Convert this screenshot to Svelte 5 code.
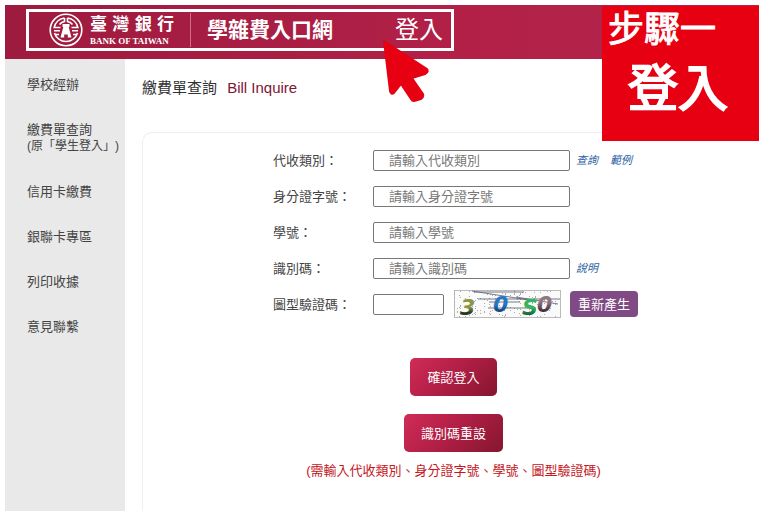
<script lang="ts">
	const menu = [
		{ text: '學校經辦' },
		{ text: '繳費單查詢', note: '(原「學生登入」)' },
		{ text: '信用卡繳費' },
		{ text: '銀聯卡專區' },
		{ text: '列印收據' },
		{ text: '意見聯繫' }
	];

	const fields = [
		{ id: 'category', label: '代收類別', links: ['查詢', '範例'] },
		{ id: 'idNumber', label: '身分證字號', links: [] },
		{ id: 'studentNo', label: '學號', links: [] },
		{ id: 'code', label: '識別碼', links: ['說明'] }
	];

	// captcha background noise
	const dots = Array.from({ length: 150 }, (_, i) => ({
		x: (i * i * 7 + i * 31) % 105,
		y: (i * i * 3 + i * 17) % 27
	}));
</script>

<div class="page">
	<header>
		<div class="frame">
			<a class="brand" href="#home">
				<svg class="seal" viewBox="0 0 34 34" aria-hidden="true">
					<g fill="none" stroke="#fff" stroke-width="1.6">
						<circle cx="17" cy="17" r="15.8" />
						<path d="M15.500 5A12 12 0 0 0 5.200 14.500H11.500M18.500 5A12 12 0 0 1 28.800 14.500H22.500" />
						<path d="M5 17.800H11M5.500 20A12 12 0 0 0 28.500 20M29 17.800H23M6 21.500H10" />
						<path d="M28 21.500H24M15.500 5V8.500A8 8 0 0 0 10.500 11.500M18.500 5V8.500A8 8 0 0 1 23.500 11.500" />
					</g>
					<path d="M13.500 11h7v3h-.8L22.500 24.500h-3.700V21.500h-3.600V24.500h-3.700L14.300 14h-.8z" fill="#fff" />
				</svg>
				<span class="names">
					<span class="zh"><span>臺</span><span>灣</span><span>銀</span><span>行</span></span>
					<span class="en">BANK OF TAIWAN</span>
				</span>
			</a>
			<span class="site">學雜費入口網</span>
			<a class="login" href="#login">登入</a>
		</div>
	</header>

	<div class="body">
		<nav>
			{#each menu as item}
				<a href="#menu">
					{item.text}
					{#if item.note}<small>{item.note}</small>{/if}
				</a>
			{/each}
		</nav>

		<main>
			<h1>繳費單查詢 <span>Bill Inquire</span></h1>

			<section class="card">
				<form>
					{#each fields as field}
						<div class="row">
							<label for={field.id}>{field.label}：</label>
							<input id={field.id} type="text" placeholder="請輸入{field.label}" />
							{#each field.links as link}
								<a href="#help">{link}</a>
							{/each}
						</div>
					{/each}
					<div class="row">
						<label for="captcha">圖型驗證碼：</label>
						<input id="captcha" class="short" type="text" />
						<svg class="captcha" viewBox="0 0 107 28" role="img" aria-label="圖型驗證碼">
							<defs>
								<linearGradient id="olive" x2="0" y2="1">
									<stop offset="0.5" stop-color="#8d9442" />
									<stop offset="0.7" stop-color="#243b20" />
								</linearGradient>
								<linearGradient id="blue" x2="0" y2="1">
									<stop offset="0.5" stop-color="#2379c4" />
									<stop offset="0.8" stop-color="#123d78" />
								</linearGradient>
								<linearGradient id="green" x2="0" y2="1">
									<stop offset="0.5" stop-color="#35b45b" />
									<stop offset="0.8" stop-color="#116137" />
								</linearGradient>
								<linearGradient id="plum" x2="0" y2="1">
									<stop offset="0.4" stop-color="#937580" />
									<stop offset="0.8" stop-color="#39282f" />
								</linearGradient>
							</defs>
							<rect x="0.5" y="0.5" width="106" height="27" fill="#fafafa" stroke="#bbb" />
							{#each dots as dot}
								<rect x={dot.x} y={dot.y} width="1" height="1" fill="#aaa" />
							{/each}
							<path d="M18 1L81 11M20 2H70M24 9H106M35 12H66M34 18H82M62 7L104 14" stroke="#555b6c" stroke-width="0.8" />
							<g class="digits">
								<text x="6" y="25" fill="url(#olive)">3</text>
								<text x="39" y="22" fill="url(#blue)">0</text>
								<text x="68" y="25" fill="url(#green)">S</text>
								<text x="83" y="22" fill="url(#plum)">0</text>
							</g>
						</svg>
						<button class="refresh" type="button">重新產生</button>
					</div>
				</form>

				<div class="actions">
					<button type="button">確認登入</button>
					<button type="button">識別碼重設</button>
					<p>(需輸入代收類別、身分證字號、學號、圖型驗證碼)</p>
				</div>
			</section>
		</main>
	</div>

	<aside class="step">
		<span>步驟一</span>
		<strong>登入</strong>
	</aside>

	<svg class="pointer" viewBox="0 0 48 66" aria-hidden="true">
		<path
			d="M3 3L46 31Q48 34 44 36L31 40L42 56Q43 59 40 61L33 63Q31 63 30 61L20 46L13 55Q10 57 9 53Z"
			fill="#e60012"
			stroke="#e60012"
			stroke-width="2"
			stroke-linejoin="round"
		/>
	</svg>
</div>

<style>
	:global(body) {
		background: #fff;
	}

	.page {
		position: relative;
		display: flex;
		flex-direction: column;
		box-sizing: border-box;
		min-height: 100vh;
		padding: 5px 5px 6px;
		font-family: 'Liberation Sans', 'Noto Sans CJK TC', sans-serif;
		font-size: 13px;
		line-height: 17px;
		text-spacing-trim: space-all;
		color: #444;
	}

	a {
		color: inherit;
		text-decoration: none;
	}

	header {
		display: flex;
		align-items: flex-start;
		box-sizing: border-box;
		height: 54px;
		padding: 4px 21px;
		background: linear-gradient(90deg, #9d1b3e, #b22048 60%, #b4254b);
		color: #fff;
	}

	.frame {
		display: flex;
		align-items: center;
		box-sizing: border-box;
		width: 428px;
		height: 42px;
		padding: 0 8px 0 20px;
		border: 3px solid #fff;
	}

	.brand {
		display: flex;
		align-items: center;
		gap: 7px;
		padding-right: 16px;
		border-right: 1px solid #d06a86;
	}

	.seal {
		width: 34px;
		height: 34px;
	}

	.names {
		display: flex;
		flex-direction: column;
		gap: 2px;
		width: 84px;
	}

	.zh {
		display: flex;
		justify-content: space-between;
		font-size: 17px;
		font-weight: 700;
		line-height: 19px;
	}

	.en {
		font-family: 'Liberation Serif', serif;
		font-size: 9px;
		font-weight: 700;
		line-height: 10px;
		white-space: nowrap;
	}

	.site {
		margin-left: 16px;
		font-size: 21px;
		font-weight: 700;
		line-height: 28px;
	}

	.login {
		margin-left: auto;
		font-size: 24px;
		line-height: 28px;
	}

	.body {
		display: flex;
		flex: 1;
	}

	nav {
		display: flex;
		flex-direction: column;
		gap: 28px;
		box-sizing: border-box;
		width: 120px;
		padding: 17px 0 0 22px;
		background: #e9e9e9;
		white-space: nowrap;
	}

	nav small {
		display: block;
		font-size: 12px;
	}

	main {
		display: flex;
		flex: 1;
		flex-direction: column;
		padding-left: 17px;
		overflow: hidden;
	}

	h1 {
		margin: 18px 0 34px;
		font-size: 15px;
		font-weight: 400;
		line-height: 21px;
		color: #333;
	}

	h1 span {
		margin-left: 6px;
		color: #7d1535;
	}

	.card {
		flex: 1;
		margin-right: -6px;
		padding-top: 16px;
		border: 1px solid #eee;
		border-bottom: 0;
		border-radius: 10px 10px 0 0;
	}

	form {
		display: flex;
		flex-direction: column;
		gap: 14px;
		width: 361px;
		margin: 0 auto;
	}

	.row {
		display: flex;
		align-items: center;
		height: 22px;
		white-space: nowrap;
	}

	.row > * {
		flex-shrink: 0;
	}

	label {
		width: 100px;
	}

	input {
		box-sizing: border-box;
		width: 197px;
		height: 21px;
		padding: 0 15px;
		border: 1px solid #777;
		border-radius: 2px;
		background: #fff;
		font: inherit;
	}

	input::placeholder {
		color: #777;
	}

	.short {
		width: 71px;
		padding: 0 4px;
	}

	.row a {
		margin-left: 6px;
		font-size: 11px;
		font-style: italic;
		color: #2b609f;
	}

	.row a + a {
		margin-left: 12px;
	}

	.captcha {
		width: 107px;
		height: 28px;
		margin: 0 9px 0 10px;
		overflow: visible;
	}

	.digits {
		font-family: 'DejaVu Sans', sans-serif;
		font-size: 22px;
		font-style: italic;
		font-weight: 700;
	}

	button {
		border: 0;
		color: #fff;
		font: inherit;
	}

	.refresh {
		height: 26px;
		padding: 0 8px;
		border-radius: 4px;
		background: #804a84;
	}

	.actions {
		display: flex;
		flex-direction: column;
		align-items: center;
		gap: 18px;
		padding-top: 43px;
	}

	.actions button {
		height: 38px;
		padding: 0 17px;
		border-radius: 5px;
		background: linear-gradient(135deg, #d02c56, #b31f47 45%, #85162f);
	}

	.actions p {
		margin: -8px 0 0;
		color: #c4161c;
	}

	.step {
		position: absolute;
		top: 6px;
		right: 5px;
		display: flex;
		flex-direction: column;
		box-sizing: border-box;
		width: 157px;
		height: 135px;
		padding: 4px 6px;
		background: #e60012;
		color: #fff;
		font-size: 36px;
		line-height: 40px;
		-webkit-text-stroke: 1px #fff;
	}

	.step strong {
		padding-left: 20px;
		font-size: 50px;
		font-weight: 400;
		line-height: 78px;
		-webkit-text-stroke: 2px #fff;
	}

	.pointer {
		position: absolute;
		top: 38px;
		left: 381px;
		width: 48px;
		height: 66px;
	}
</style>
